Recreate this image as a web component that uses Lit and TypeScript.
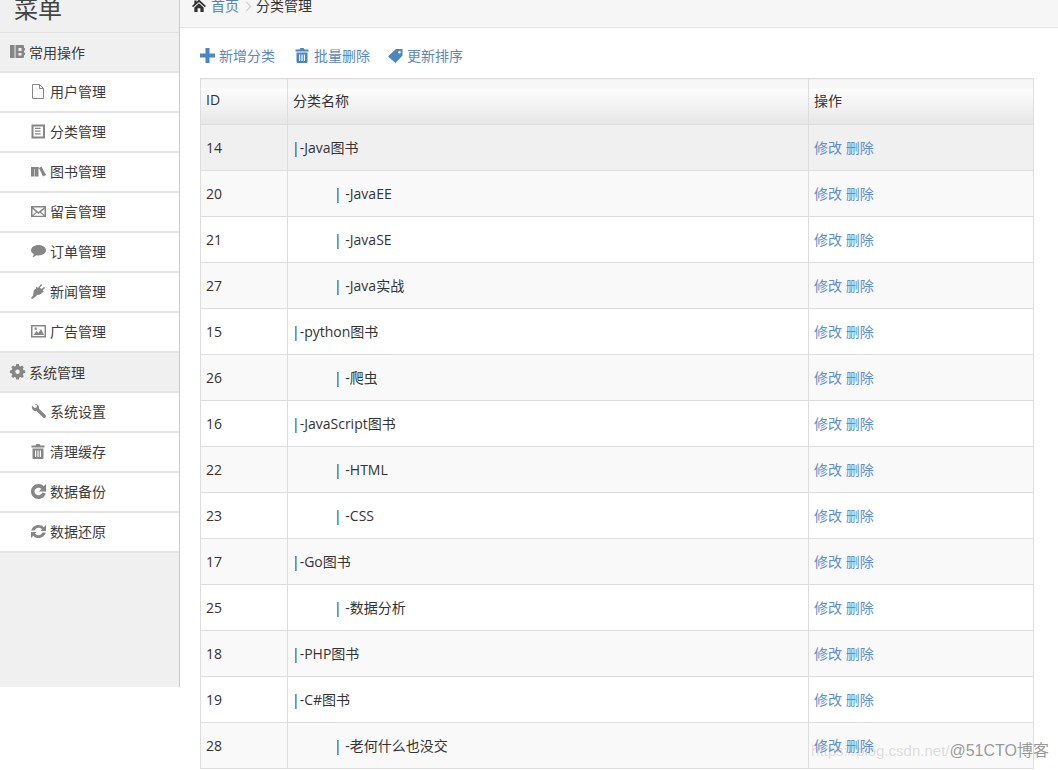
import { LitElement, html, css, svg } from "lit";
import { customElement } from "lit/decorators.js";

const icons: Record<string, any> = {
  book: svg`<path fill-rule="evenodd" d="M0 1h4.500v13H0zM5.500 1H13a1 1 0 0 1 1 1v2h1v2.500h-1V8.500h1V11h-1v2a1 1 0 0 1-1 1H5.500zM8.500 4v3h3V4zM8.500 9v2.500h3V9z"/>`,
  file: svg`<path fill="#fff" stroke="currentColor" d="M1.500.5h7l4 4v10h-11z"/><path fill="none" stroke="currentColor" d="M8.500.5v4h4"/>`,
  list: svg`<path fill-rule="evenodd" d="M.5.5h13.500v14H.5zM2.500 2.500v10H12v-10zM4 3.800h5.500v1.200H4zM4 6.500h5.500v1.200H4zM4 9.200h5.500v1.200H4z"/>`,
  books: svg`<path d="M0 3h3.500v9.500H0zM4 3h3.500v9.500H4zM8 4l2.500-1.500L15 11l-3 1.500z"/><path d="M0 3h7.500v2H0z"/>`,
  mail: svg`<path fill-rule="evenodd" d="M0 2h15v11H0zM2 3.500 7.500 8 13 3.500zM1.500 5v6l3.500-3zM13.500 5 10 8l3.500 3zM6 8.800 2.300 11.700h10.400L9 8.800 7.500 10z"/>`,
  chat: svg`<path d="M7.500 1C11.600 1 15 3.300 15 6.200s-3.400 5.200-7.500 5.200c-.8 0-1.500-.1-2.200-.2C4.200 12.300 2.500 13 1.500 13c.7-.7 1.200-1.800 1.300-2.900C1 9.100 0 7.700 0 6.200 0 3.300 3.400 1 7.500 1z"/>`,
  plug: svg`<path d="M10 0l1.200 1-2.400 2.500 1.700 1.600L13 3l1 1-2.400 2.400 1.200 1.100-1 1-.4-.3c-1 1.700-3 3-4.900 2.500L3.300 13.700 1 15l-1-1 2-2.500.5-2.700c-.3-1.800 1-3.600 2.700-4.600L4.800 3.800l1-1L7 4z"/>`,
  pic: svg`<path fill-rule="evenodd" d="M0 1h15v12.500H0zM1.500 2.500v9.500h12V2.500zM2.500 11l3-4 2 2 2.500-4 3 6zM3.500 3.500h2.200v2.200H3.500z"/>`,
  cog: svg`<path fill-rule="evenodd" d="M6 0h3l.4 2.100 1.300.6L12.500 1.500 14.500 3.500 13.300 5.300l.6 1.300L16 7v3l-2.100.4-.6 1.300 1.200 1.800-2 2-1.800-1.200-1.300.6L9 17H6l-.4-2.100-1.300-.6-1.800 1.200-2-2 1.200-1.800-.6-1.300L-1 10V7l2.100-.4.6-1.300L.5 3.500l2-2 1.800 1.200 1.300-.6zM7.500 6a2.500 2.500 0 1 0 0 5 2.500 2.500 0 0 0 0-5z" transform="translate(.8 .1) scale(.9)"/>`,
  wrench: svg`<path d="M1 1.500 3.500 4 5.500 3.500 6 1.500 3.500 0C5.500-.5 7.500.8 8 3c.1.6 0 1.100-.2 1.600L14.500 11c.7.800.7 1.800 0 2.500s-1.800.7-2.500 0L5.500 7C3 7.800 .3 5.500 1 1.500z"/>`,
  trash: svg`<path fill-rule="evenodd" d="M4.500 1.500 5.500 0h3l1 1.500H13.500V3.500H.5V1.500zM1.500 4.500h11V14a1 1 0 0 1-1 1h-9a1 1 0 0 1-1-1zM4 6.500V13h1.200V6.500zM6.400 6.500V13h1.200V6.500zM8.800 6.500V13H10V6.500z"/>`,
  redo: svg`<path d="M7.500 0c2.100 0 4 .9 5.300 2.300L15 0v7.500H7.700l2.600-2.600C9.600 4.300 8.600 3.800 7.500 3.800 5.200 3.800 3.500 5.600 3.500 7.500s1.700 3.700 4 3.700c1.800 0 3.300-1.100 3.800-2.600l3.400.9C13.800 12.700 11 15 7.500 15 3.400 15 0 11.600 0 7.500S3.400 0 7.500 0z"/>`,
  refresh: svg`<path d="M7.500 1c2.100 0 4 .9 5.300 2.300L15 1v6H9.500l1.500-1.700C10.200 4.400 9 3.800 7.500 3.800 5.700 3.800 4.200 5 3.600 6.500H.3C1 3.400 4 1 7.500 1zM0 8h5.500L4 9.700c.8.900 2 1.500 3.500 1.500 1.800 0 3.300-1.200 3.900-2.700h3.300C14 11.600 11 14 7.500 14c-2.100 0-4-.9-5.300-2.300L0 14z"/>`,
  home: svg`<path d="M7.500.5 15 7.500l-1.200 1.300L7.500 3.100 1.200 8.800 0 7.500l2.500-2.300V1.500h2.500v1.400zM2.500 9 7.500 4.500l5 4.500v5H9V10H6v4H2.500z"/>`,
  plus: svg`<path d="M5.500 0h4v5.500H15v4H9.500V15h-4V9.500H0v-4h5.500z"/>`,
  tag: svg`<path fill-rule="evenodd" d="M8 1h6.500v6.500L7.500 15 0 8.500zM11.500 3a1.300 1.300 0 1 0 0 2.600 1.300 1.300 0 0 0 0-2.600z"/>`,
};

const icon = (name: string, cls = "") =>
  html`<svg class="ic ${cls}" viewBox="0 0 15 15">${icons[name]}</svg>`;

type Group = { icon: string; title: string; items: [string, string][] };
const groups: Group[] = [
  {
    icon: "book",
    title: "常用操作",
    items: [
      ["file", "用户管理"],
      ["list", "分类管理"],
      ["books", "图书管理"],
      ["mail", "留言管理"],
      ["chat", "订单管理"],
      ["plug", "新闻管理"],
      ["pic", "广告管理"],
    ],
  },
  {
    icon: "cog",
    title: "系统管理",
    items: [
      ["wrench", "系统设置"],
      ["trash", "清理缓存"],
      ["redo", "数据备份"],
      ["refresh", "数据还原"],
    ],
  },
];

const rows: [number, string, boolean][] = [
  [14, "|-Java图书", false],
  [20, "| -JavaEE", true],
  [21, "| -JavaSE", true],
  [27, "| -Java实战", true],
  [15, "|-python图书", false],
  [26, "| -爬虫", true],
  [16, "|-JavaScript图书", false],
  [22, "| -HTML", true],
  [23, "| -CSS", true],
  [17, "|-Go图书", false],
  [25, "| -数据分析", true],
  [18, "|-PHP图书", false],
  [19, "|-C#图书", false],
  [28, "| -老何什么也没交", true],
];

@customElement("app-root")
export class AppRoot extends LitElement {
  static styles = css`
    :host {
      display: block;
      position: relative;
      width: 1058px;
      height: 770px;
      overflow: hidden;
      background: #fff;
      font-family: "Open Sans", "Noto Sans CJK SC", sans-serif;
      font-size: 14px;
      color: #333;
    }
    .page { display: flex; align-items: flex-start; height: 770px; }
    .side {
      width: 180px;
      height: 687px;
      flex: none;
      box-sizing: border-box;
      background: #f0f0f0;
      border-right: 1px solid #ccc;
    }
    .brand {
      height: 33px;
      box-sizing: border-box;
      border-bottom: 1px solid #e2e2e2;
      padding-left: 14px;
      font-size: 24px;
      line-height: 18px;
      color: #444;
      overflow: hidden;
    }
    .head {
      height: 40px;
      box-sizing: border-box;
      display: flex;
      align-items: center;
      gap: 4px;
      padding: 0 0 1px 10px;
      border-bottom: 2px solid #e4e4e4;
    }
    .item {
      height: 40px;
      box-sizing: border-box;
      display: flex;
      align-items: center;
      gap: 4px;
      padding: 0 0 2px 31px;
      background: #fff;
      border-bottom: 2px solid #e4e4e4;
    }
    .ic { width: 15px; height: 15px; flex: none; fill: currentColor; overflow: visible; }
    .head .ic, .item .ic { color: #868686; }
    .label { font-size: 14px; color: #3c3c3c; }
    .main { flex: 1; min-width: 0; }
    .crumb {
      height: 28px;
      box-sizing: border-box;
      background: #f6f6f6;
      border-bottom: 1px solid #e2e2e2;
      padding: 0 0 15px 12px;
      display: flex;
      align-items: center;
      gap: 5px;
      line-height: 12px;
      font-size: 14px;
    }
    .crumb .ic { color: #333; width: 14px; height: 14px; }
    .crumb .home { color: #5a84b0; }
    .crumb .sep {
      width: 6px;
      height: 6px;
      margin: 0 1px 0 -1px;
      border-top: 1px solid #ccc;
      border-right: 1px solid #ccc;
      transform: rotate(45deg);
    }
    .tools {
      height: 50px;
      box-sizing: border-box;
      padding: 4px 0 0 20px;
      display: flex;
      align-items: center;
      gap: 20px;
      color: #5c88b8;
      font-size: 14px;
    }
    .tools span { display: flex; align-items: center; gap: 4px; }
    .tools span:last-child { margin-left: -2px; }
    .tools .ic { color: #4a86c0; }
    table {
      margin-left: 20px;
      width: 834px;
      border-collapse: collapse;
      table-layout: fixed;
      font-size: 14px;
    }
    th, td {
      border: 1px solid #ddd;
      padding: 0 5px;
      text-align: left;
      font-weight: 400;
      box-sizing: border-box;
    }
    th {
      height: 46px;
      padding-bottom: 4px;
      background: linear-gradient(#f7f7f7 0, #f7f7f7 9px, #fdfdfd 9px, #e6e6e6 100%);
      color: #333;
    }
    td { height: 46px; background: #fff; }
    tr:nth-child(even) td { background: #f9f9f9; }
    tr.hover td { background: #f0f0f0; }
    td.name { padding-bottom: 1px; text-indent: -1px; }
    td.child { padding-left: 47px; }
    td.act { color: #5b8fc9; font-size: 14px; padding-bottom: 2px; }
    .wm {
      position: absolute;
      right: 9px;
      bottom: 9px;
      display: flex;
      align-items: baseline;
      font-family: "Liberation Sans", "Noto Sans CJK SC", sans-serif;
      pointer-events: none;
    }
    .wm .a { color: rgba(150, 150, 150, 0.3); font-size: 15px; }
    .wm .b { color: rgba(120, 120, 120, 0.75); font-size: 16px; }
  `;

  render() {
    return html`
      <div class="page">
        <aside class="side">
          <div class="brand">菜单</div>
          ${groups.map(
            (g) => html`
              <div class="head">${icon(g.icon)}<span class="label">${g.title}</span></div>
              ${g.items.map(
                ([i, t]) => html`<div class="item">${icon(i)}<span class="label">${t}</span></div>`
              )}
            `
          )}
        </aside>
        <main class="main">
          <div class="crumb">
            ${icon("home")}<span class="home">首页</span><i class="sep"></i><span>分类管理</span>
          </div>
          <div class="tools">
            <span>${icon("plus")}新增分类</span>
            <span>${icon("trash")}批量删除</span>
            <span>${icon("tag")}更新排序</span>
          </div>
          <table>
            <colgroup><col style="width:87px" /><col style="width:521px" /><col /></colgroup>
            <thead>
              <tr><th>ID</th><th>分类名称</th><th>操作</th></tr>
            </thead>
            <tbody>
              ${rows.map(
                ([id, name, child], i) => html`
                  <tr class=${i === 0 ? "hover" : ""}>
                    <td>${id}</td>
                    <td class="name ${child ? "child" : ""}">${name}</td>
                    <td class="act">修改 删除</td>
                  </tr>
                `
              )}
            </tbody>
          </table>
        </main>
      </div>
      <div class="wm"><span class="a">https://blog.csdn.net/</span><span class="b">@51CTO博客</span></div>
    `;
  }
}
